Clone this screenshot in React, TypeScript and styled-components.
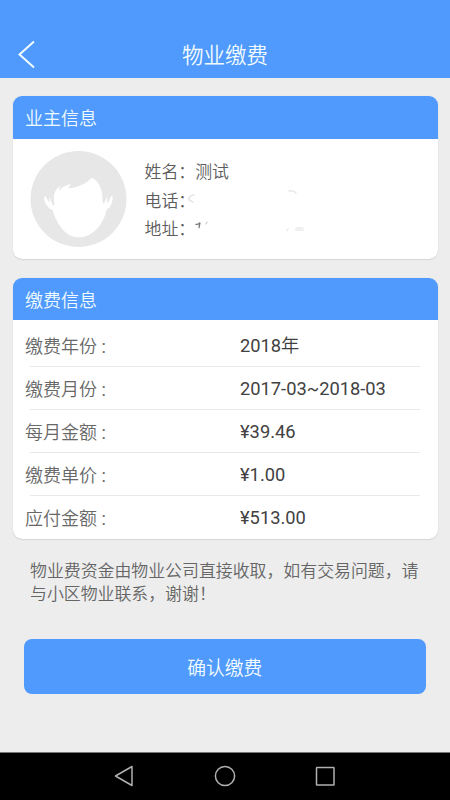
import React from "react";
import styled, { createGlobalStyle } from "styled-components";

const BLUE = "#4f9afc";

const GlobalStyle = createGlobalStyle`
  * { box-sizing: border-box; }
  html, body { margin: 0; padding: 0; }
  body {
    background: #ededed;
    font-family: Roboto, "Noto Sans CJK SC", sans-serif;
    font-weight: 400;
  }
`;

const Screen = styled.div`
  width: 450px;
  height: 800px;
  display: flex;
  flex-direction: column;
  background: #ededed;
  overflow: hidden;
`;

const TopBar = styled.header`
  flex: none;
  height: 78px;
  padding: 30px 18px 0;
  display: grid;
  grid-template-columns: 20px 1fr 20px;
  align-items: center;
  background: ${BLUE};
  color: #f2fbff;
`;

const BackButton = styled.button`
  height: 30px;
  padding: 0;
  border: 0;
  background: none;
  color: inherit;
  display: flex;
  align-items: center;
`;

const Title = styled.h1`
  margin: 0;
  padding-top: 2px;
  text-align: center;
  font-size: 21.5px;
  line-height: 47px;
  font-weight: 350;
`;

const Content = styled.main`
  flex: 1;
  padding: 18px 12.5px 0;
  display: flex;
  flex-direction: column;
`;

const Card = styled.section<{ $height: number }>`
  flex: none;
  height: ${(p) => p.$height}px;
  margin-bottom: 19px;
  border-radius: 9px;
  background: #fff;
  box-shadow: 0 1px 1px rgba(0, 0, 0, 0.09), 0 0 1px rgba(0, 0, 0, 0.15);
  overflow: hidden;
`;

const CardHeader = styled.h2<{ $height: number }>`
  margin: 0;
  height: ${(p) => p.$height}px;
  padding-left: 12.5px;
  background: ${BLUE};
  color: #f0faff;
  font-size: 18px;
  font-weight: 350;
  line-height: 46px;
`;

const Owner = styled.div`
  display: flex;
  padding: 12px 0 0 17.5px;
`;

const OwnerLines = styled.dl`
  margin: 6px 0 0 17.5px;
`;

const OwnerLine = styled.div`
  display: flex;
  height: 28.6px;
  align-items: center;
  font-size: 16.9px;
  font-weight: 350;
  line-height: 28px;
  color: #5c5c5c;
`;

const Term = styled.dt`
  font-family: "Noto Sans CJK SC", sans-serif;
  width: 50.7px;
`;

const Detail = styled.dd`
  margin: 0;
  font-family: "Noto Sans CJK SC", sans-serif;
  display: flex;
`;

const Rows = styled.dl`
  margin: 0;
  padding: 4px 12.5px 0;
`;

const Row = styled.div`
  height: 43px;
  display: grid;
  grid-template-columns: 215px 1fr;
  align-items: start;
  background: linear-gradient(#e9e9e9, #e9e9e9) 5px 100% / 390px 1px no-repeat;
  &:last-child { background: none; }
`;

const Label = styled.dt`
  padding-top: 1px;
  font-size: 18px;
  font-weight: 350;
  line-height: 43px;
  color: #686868;
`;

const Colon = styled.span`
  margin-left: 4.5px;
  font-weight: 400;
`;

const Value = styled.dd`
  margin: 0;
  font-size: 18.3px;
  line-height: 44px;
  color: #414141;
`;

const Unit = styled.span`
  font-family: "Noto Sans CJK SC", sans-serif;
  font-weight: 350;
  line-height: 1;
`;

const Note = styled.p`
  margin: 0 14px 0 17.5px;
  white-space: nowrap;
  font-family: "Noto Sans CJK SC", sans-serif;
  font-size: 16.9px;
  font-weight: 350;
  line-height: 23px;
  color: #656565;
`;

const Confirm = styled.button`
  flex: none;
  height: 55px;
  margin: 35px 11.5px 0 11px;
  padding: 0;
  border: 0;
  border-radius: 8px;
  background: ${BLUE};
  color: #f2fbff;
  font: 350 18.8px "Noto Sans CJK SC", sans-serif;
`;

const SystemBar = styled.nav`
  flex: none;
  height: 48px;
  border-top: 1px solid #777;
  display: flex;
  justify-content: center;
  align-items: center;
  gap: 76px;
  padding-bottom: 1px;
  background: #000;
`;

const Trace = styled.svg`
  display: block;
  overflow: visible;
`;

const BackIcon = () => (
  <svg width="20" height="30" viewBox="0 0 20 30" fill="none" stroke="currentColor" strokeWidth="2">
    <path d="M16 1.500 1.500 14.500 16 27.500" />
  </svg>
);

const Avatar = () => (
  <svg width="97" height="97" viewBox="0 0 97 97">
    <circle cx="48.500" cy="48" r="48" fill="#e7e7e7" />
    <path
      fill="#fff"
      d="M24.500 53 C22.500 44 25 38 30.500 35 C29.500 37 29 38 29 39.500 C33 35.500 37 33.500 41.500 33 C40 34 39 35.500 38.500 37.300 C47 36.500 56 33 61.800 26.700 C67 29 70 34 71.200 39 C73 44 72 50 73.500 53 C75 51 76 47 76.800 45.700 C77.500 48 77 50 77 52 C79 51 80.500 46 81.500 45 C83 45 83 48 82 51 C81 55 79 58 77 58 C73 75 62 86.300 48.500 86.300 C36 86.300 27 74 22.500 59 C18 58 14 51 14.200 47 C14.500 44 16.500 45 17 48 L19.500 52 L19.500 46 C21.500 49 21 52 23.500 55 Z"
    />
  </svg>
);

const PhoneTrace = () => (
  <Trace width="112" height="28" viewBox="0 0 112 28" fill="none" strokeLinecap="round">
    <path d="M-1 9q-6 1-5 5l4 2" stroke="#e4e4e4" strokeWidth="1.500" />
    <path d="M94 5q5-1 7 2" stroke="#e8e8e8" strokeWidth="1.500" />
  </Trace>
);

const AddressTrace = () => (
  <Trace width="112" height="28" viewBox="0 0 112 28" fill="none" strokeLinecap="round">
    <path d="M1 10.500q3 0 4-2l-1 5" stroke="#777" strokeWidth="1.300" />
    <path d="m12 8-1 2" stroke="#bbb" />
    <path d="m93 15-1 2M101 14h7M100 16h9" stroke="#e2e2e2" />
  </Trace>
);

const payment = [
  { label: "缴费年份", value: "2018", unit: "年" },
  { label: "缴费月份", value: "2017-03~2018-03" },
  { label: "每月金额", value: "¥39.46" },
  { label: "缴费单价", value: "¥1.00" },
  { label: "应付金额", value: "¥513.00" },
];

export default function App() {
  return (
    <>
      <GlobalStyle />
      <Screen>
        <TopBar>
          <BackButton aria-label="返回"><BackIcon /></BackButton>
          <Title>物业缴费</Title>
        </TopBar>
        <Content>
          <Card $height={163}>
            <CardHeader $height={43}>业主信息</CardHeader>
            <Owner>
              <Avatar />
              <OwnerLines>
                <OwnerLine><Term>姓名：</Term><Detail>测试</Detail></OwnerLine>
                <OwnerLine><Term>电话：</Term><Detail><PhoneTrace /></Detail></OwnerLine>
                <OwnerLine><Term>地址：</Term><Detail><AddressTrace /></Detail></OwnerLine>
              </OwnerLines>
            </Owner>
          </Card>
          <Card $height={261}>
            <CardHeader $height={42}>缴费信息</CardHeader>
            <Rows>
              {payment.map(({ label, value, unit }) => (
                <Row key={label}>
                  <Label>{label}<Colon>:</Colon></Label>
                  <Value>{value}{unit && <Unit>{unit}</Unit>}</Value>
                </Row>
              ))}
            </Rows>
          </Card>
          <Note>物业费资金由物业公司直接收取，如有交易问题，请<br />与小区物业联系，谢谢！</Note>
          <Confirm>确认缴费</Confirm>
        </Content>
        <SystemBar>
          <svg width="24" height="24" viewBox="0 0 24 24" fill="none" stroke="#b0b0b0" strokeWidth="1.500" strokeLinejoin="round">
            <path d="M19 2.500v19L2.500 12Z" />
          </svg>
          <svg width="24" height="24" viewBox="0 0 24 24" fill="none" stroke="#b0b0b0" strokeWidth="1.500">
            <circle cx="12" cy="12" r="9.600" />
          </svg>
          <svg width="24" height="24" viewBox="0 0 24 24" fill="none" stroke="#b0b0b0" strokeWidth="1.500">
            <rect x="3.500" y="3.500" width="17.500" height="17.500" rx="0.500" />
          </svg>
        </SystemBar>
      </Screen>
    </>
  );
}
